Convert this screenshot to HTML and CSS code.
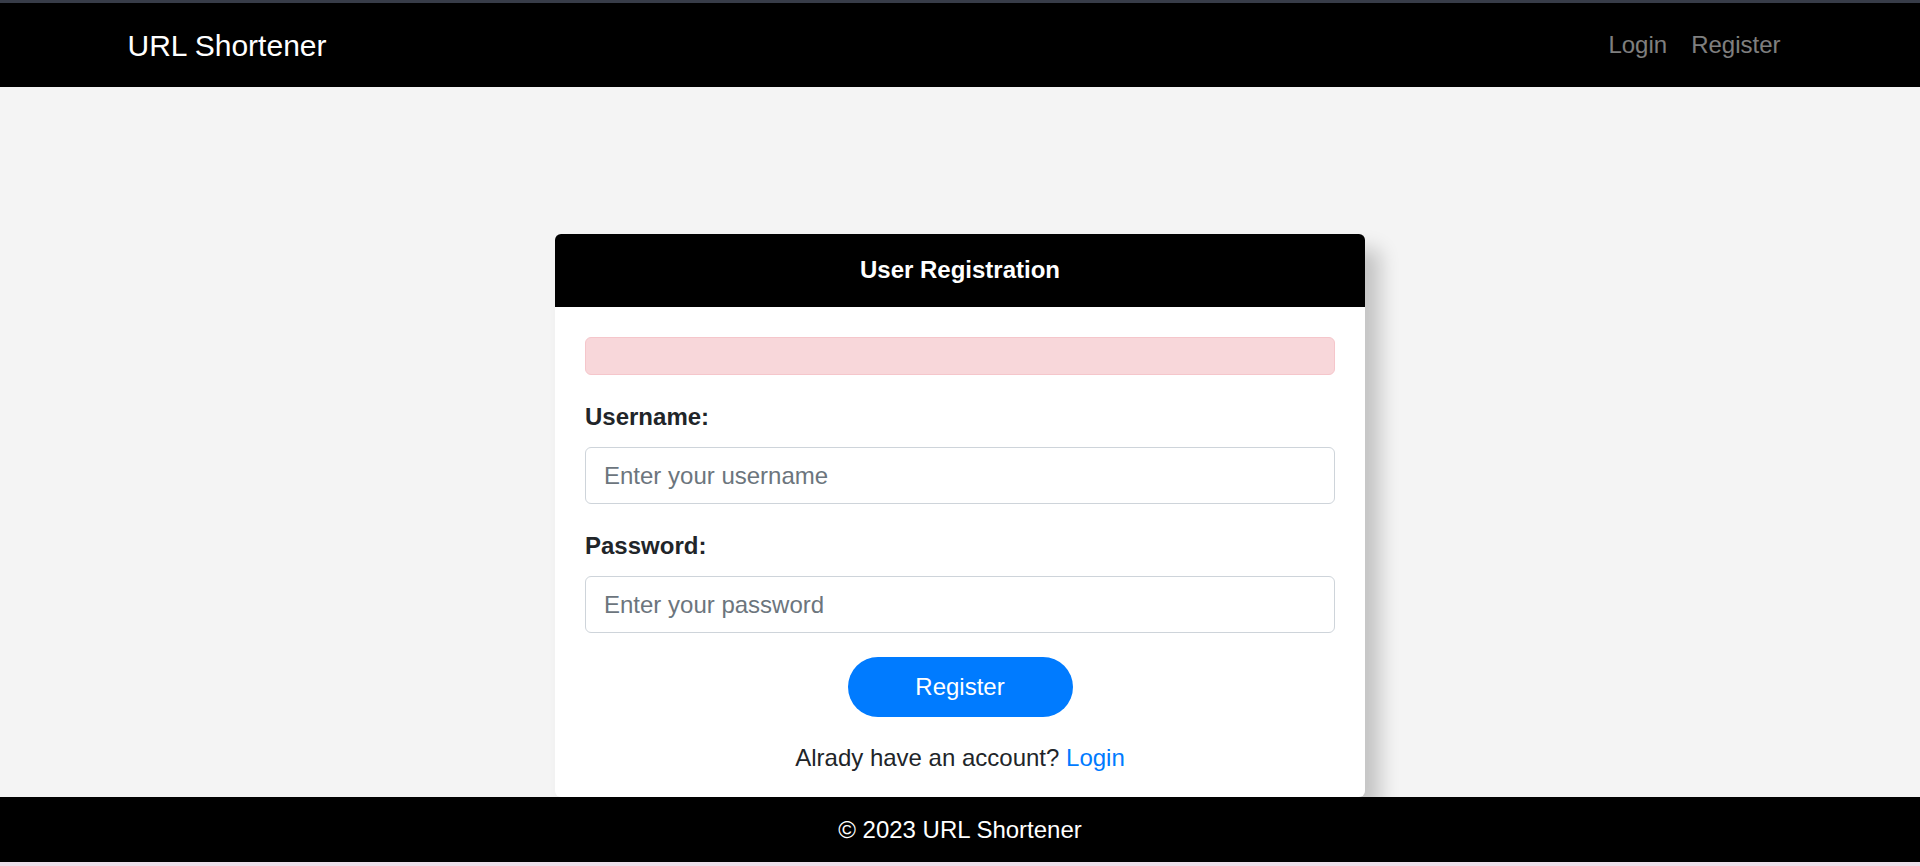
FILE: index.html
```html
<!DOCTYPE html>
<html lang="en">
<head>
<meta charset="utf-8">
<title>URL Shortener - Register</title>
<link rel="stylesheet" href="styles.css">
</head>
<body>
<div class="page">
  <div class="top-strip"></div>
  <nav class="navbar">
    <div class="container">
      <a class="brand" href="#">URL Shortener</a>
      <ul class="nav">
        <li><a class="nav-link" href="#">Login</a></li>
        <li><a class="nav-link" href="#">Register</a></li>
      </ul>
    </div>
  </nav>
  <main class="main">
    <div class="card">
      <div class="card-header">User Registration</div>
      <div class="card-body">
        <div class="alert"></div>
        <form class="form">
          <div class="form-group">
            <label class="label" for="username">Username:</label>
            <input class="input" id="username" type="text" placeholder="Enter your username">
          </div>
          <div class="form-group">
            <label class="label" for="password">Password:</label>
            <input class="input" id="password" type="password" placeholder="Enter your password">
          </div>
          <div class="actions">
            <button class="btn" type="button">Register</button>
          </div>
        </form>
        <p class="switch">Alrady have an account? <a class="link" href="#">Login</a></p>
      </div>
    </div>
  </main>
  <footer class="footer">© 2023 URL Shortener</footer>
  <div class="bottom-strip"></div>
</div>
</body>
</html>
```

FILE: styles.css
```css
* {
  box-sizing: border-box;
}

html, body {
  margin: 0;
  padding: 0;
}

body {
  font-family: "Liberation Sans", Arial, sans-serif;
  font-size: 24px;
  line-height: 1.5;
  color: #212529;
  background: #f4f4f4;
}

.page {
  height: 100vh;
  display: flex;
  flex-direction: column;
  overflow: hidden;
}

.top-strip {
  height: 3px;
  flex: none;
  background: #373c48;
}

.bottom-strip {
  height: 4px;
  flex: none;
  background: #ecdde8;
}

.navbar {
  flex: none;
  height: 84px;
  background: #000;
  display: flex;
  align-items: center;
}

.container {
  width: 1710px;
  margin: 0 auto;
  padding: 0 22.5px;
  display: flex;
  align-items: center;
  justify-content: space-between;
}

.brand {
  color: #fff;
  font-size: 30px;
  line-height: 45px;
  text-decoration: none;
}

.nav {
  list-style: none;
  margin: 0;
  padding: 0;
  display: flex;
}

.nav-link {
  display: block;
  padding: 0 12px;
  color: rgba(255, 255, 255, 0.5);
  text-decoration: none;
  font-size: 24px;
  line-height: 36px;
}

.main {
  flex: 1;
  min-height: 0;
  padding-top: 147px;
}

.card {
  width: 810px;
  margin: 0 auto;
  background: #fff;
  border-radius: 6px;
  box-shadow: 15px 15px 20px rgba(0, 0, 0, 0.2);
}

.card-header {
  background: #000;
  color: #fff;
  font-weight: bold;
  text-align: center;
  padding: 18px 30px 19px;
  line-height: 36px;
  border-radius: 6px 6px 0 0;
}

.card-body {
  padding: 30px 30px 21px;
}

.alert {
  height: 38px;
  background: #f8d7da;
  border: 1px solid #f5c6cb;
  border-radius: 6px;
  margin-bottom: 24px;
}

.form {
  margin: 0;
}

.form-group {
  margin-bottom: 24px;
}

.label {
  display: block;
  font-weight: bold;
  line-height: 36px;
  margin-bottom: 12px;
}

.input {
  display: block;
  width: 100%;
  height: 57px;
  padding: 0 18px;
  font: inherit;
  font-size: 24px;
  color: #495057;
  background: #fff;
  border: 1px solid #ced4da;
  border-radius: 6px;
  outline: none;
}

.input::placeholder {
  color: #6c757d;
  opacity: 1;
}

.actions {
  display: flex;
  justify-content: center;
  margin-bottom: 23px;
}

.btn {
  width: 225px;
  height: 60px;
  border: none;
  border-radius: 30px;
  background: #007bff;
  color: #fff;
  font: inherit;
  font-size: 24px;
  line-height: 36px;
  cursor: pointer;
}

.switch {
  margin: 0;
  text-align: center;
  line-height: 36px;
}

.link {
  color: #007bff;
  text-decoration: none;
}

.footer {
  flex: none;
  height: 65px;
  background: #000;
  color: #fff;
  display: flex;
  align-items: center;
  justify-content: center;
  font-size: 24px;
  position: relative;
  z-index: 1;
}
```
